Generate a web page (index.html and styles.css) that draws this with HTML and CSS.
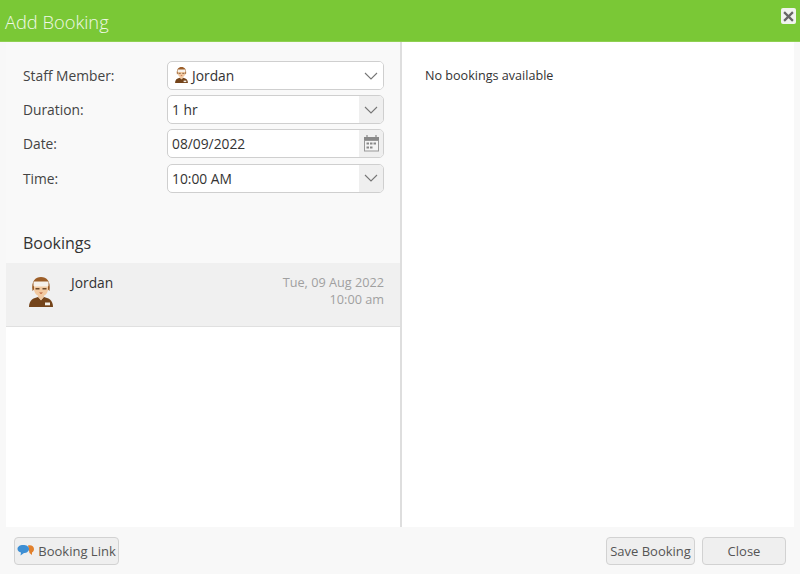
FILE: index.html
```html
<!DOCTYPE html>
<html lang="en">
<head>
<meta charset="utf-8">
<title>Add Booking</title>
<link rel="stylesheet" href="styles.css">
</head>
<body>
<svg class="defs" width="0" height="0" aria-hidden="true">
  <symbol id="person" viewBox="0 0 24 30">
    <path d="M0 30c0-3 1-6 3-7.500 2-1.500 4-2 6-2.500l3 3 3-3c2 .5 4 1 6 2.500 2 1.500 3 4.500 3 7.500z" fill="#74441a"/>
    <path d="M9 19.500l3 4 3-4v-3H9z" fill="#f0c8a0"/>
    <rect x="16" y="25.500" width="5" height="2.800" fill="#f4f0e8"/>
    <path d="M4.500 9c0 7 3.500 10.500 7.500 10.500S19.500 16 19.500 9z" fill="#f2c9a0"/>
    <path d="M3.500 14C2 4 6.500 0 12 0s10 4 8.500 14L19 12.500V9H5v3.500z" fill="#9c5e28"/>
    <rect x="4.500" y="4.500" width="15" height="5" rx="1" fill="#f6f1ea"/>
    <rect x="6.500" y="11" width="4" height="1.500" fill="#6d4a2a"/>
    <rect x="13.500" y="11" width="4" height="1.500" fill="#6d4a2a"/>
    <path d="M10 15.500h4l-2 1.500z" fill="#b5562f"/>
  </symbol>
  <symbol id="chevron" viewBox="0 0 14 8">
    <path d="M1 1l6 6 6-6" fill="none" stroke="#777" stroke-width="1.100"/>
  </symbol>
</svg>
<div class="dialog">
  <header class="titlebar">
    <h1 class="title">Add Booking</h1>
    <button class="close-x" type="button" aria-label="Close">
      <svg width="11" height="11" viewBox="0 0 10 10"><path d="M1 1l8 8M9 1l-8 8" stroke="#666" stroke-width="2"/></svg>
    </button>
  </header>
  <main class="main">
    <section class="left">
      <form class="form">
        <div class="row">
          <span class="label">Staff Member:</span>
          <div class="field">
            <span class="value"><svg class="mini" width="13" height="16"><use href="#person"/></svg>Jordan</span>
            <span class="addon addon-plain"><svg width="14" height="8"><use href="#chevron"/></svg></span>
          </div>
        </div>
        <div class="row">
          <span class="label">Duration:</span>
          <div class="field">
            <span class="value">1 hr</span>
            <span class="addon"><svg width="14" height="8"><use href="#chevron"/></svg></span>
          </div>
        </div>
        <div class="row">
          <span class="label">Date:</span>
          <div class="field">
            <span class="value">08/09/2022</span>
            <span class="addon">
              <svg width="17" height="17" viewBox="0 0 17 17">
                <path d="M4 0v3M13 0v3" stroke="#888" stroke-width="1.200"/>
                <rect x="1" y="2" width="15" height="4" fill="#888"/>
                <rect x="1.500" y="5.500" width="14" height="10.500" fill="#f4f4f4" stroke="#999"/>
                <path d="M3.500 8.500h10M3.500 12.500h6" stroke="#888" stroke-width="2" stroke-dasharray="2.500 1"/>
              </svg>
            </span>
          </div>
        </div>
        <div class="row">
          <span class="label">Time:</span>
          <div class="field">
            <span class="value">10:00 AM</span>
            <span class="addon"><svg width="14" height="8"><use href="#chevron"/></svg></span>
          </div>
        </div>
      </form>
      <h2 class="heading">Bookings</h2>
      <div class="list">
        <article class="item">
          <svg class="avatar" width="24" height="30"><use href="#person"/></svg>
          <span class="item-name">Jordan</span>
          <span class="item-when">Tue, 09 Aug 2022<br>10:00 am</span>
        </article>
      </div>
    </section>
    <section class="right">No bookings available</section>
  </main>
  <footer class="footer">
    <button class="btn btn-link" type="button">
      <svg width="18" height="14" viewBox="0 0 18 14">
        <path d="M11 1.500c3-1 6 .5 6 3.500 0 2-1 3-2 3.500L15 11l-2.500-2z" fill="#e2802c"/>
        <path d="M6 1c3.500 0 6 1.500 6 4s-2.500 4-5 4L3.500 11.500 4 8.500C2 8 .5 6.800.5 5 .5 2.500 3 1 6 1z" fill="#3d8fd4"/>
      </svg><span>Booking Link</span>
    </button>
    <div class="footer-actions">
      <button class="btn btn-save" type="button">Save Booking</button>
      <button class="btn btn-close" type="button">Close</button>
    </div>
  </footer>
</div>
</body>
</html>
```

FILE: styles.css
```css
* { box-sizing: border-box; }
html, body { margin: 0; height: 100%; }
body {
  font-family: "Open Sans", "Liberation Sans", sans-serif;
  font-size: 13.800px;
  color: #333;
  background: #f8f8f8;
}
.defs { display: block; height: 0; }
.dialog { display: flex; flex-direction: column; width: 800px; height: 574px; }
.titlebar {
  flex: 0 0 42px;
  display: flex;
  align-items: center;
  justify-content: space-between;
  padding: 0 4px 0 5px;
  background: #7ac836;
  border-bottom: 1px solid #8fd052;
}
.title { margin: 2px 0 0; font-size: 18.300px; font-weight: 300; color: #f0f8e6; }
.close-x {
  display: flex;
  align-items: center;
  justify-content: center;
  width: 15px;
  height: 16px;
  margin-bottom: 9px;
  padding: 0;
  border: 0;
  border-radius: 2px;
  background: #f0f3ee;
}
.main { flex: 1; display: flex; padding: 0 6px; min-height: 0; }
.left {
  flex: 0 0 396px;
  display: flex;
  flex-direction: column;
  background: #f9f9f9;
  border-right: 2px solid #dedede;
}
.form { display: flex; flex-direction: column; gap: 5.200px; padding: 19px 16px 0 17px; }
.row { display: flex; align-items: center; height: 29px; }
.label { flex: 0 0 144px; color: #444; }
.field {
  flex: 1;
  display: flex;
  height: 29px;
  background: #fff;
  border: 1px solid #cfcfcf;
  border-radius: 5px;
  overflow: hidden;
}
.value { flex: 1; display: flex; align-items: center; padding-left: 4px; color: #333; }
.mini { margin: 0 4px 2px 3px; }
.addon {
  flex: 0 0 24px;
  display: flex;
  align-items: center;
  justify-content: center;
  background: #efefef;
}
.addon-plain { background: #fff; }
.heading { margin: 36px 0 0 17px; height: 34px; font-size: 16px; font-weight: 400; line-height: 28px; color: #333; }
.list { flex: 1; background: #fff; }
.item {
  display: flex;
  height: 64px;
  padding: 10px 16px 0 23px;
  background: #f0f0f0;
  border-bottom: 1px solid #e0e0e0;
}
.avatar { margin-top: 4px; }
.item-name { margin-left: 18px; color: #333; }
.item-when { margin-left: auto; text-align: right; font-size: 12.700px; line-height: 17px; padding-top: 1px; color: #a0a0a0; }
.right { flex: 1; padding: 25px 0 0 23px; background: #fff; font-size: 12.600px; }
.footer {
  flex: 0 0 47px;
  display: flex;
  align-items: flex-start;
  justify-content: space-between;
  padding: 10px 14px 0;
}
.footer-actions { display: flex; gap: 7px; }
.btn {
  display: flex;
  align-items: center;
  justify-content: center;
  height: 28px;
  padding: 0;
  font: inherit;
  font-size: 13px;
  white-space: nowrap;
  color: #555;
  background: #efefef;
  border: 1px solid #d2d2d2;
  border-radius: 4px;
}
.btn-link { width: 105px; gap: 3px; }
.btn-save { width: 89px; }
.btn-close { width: 84px; }
```
